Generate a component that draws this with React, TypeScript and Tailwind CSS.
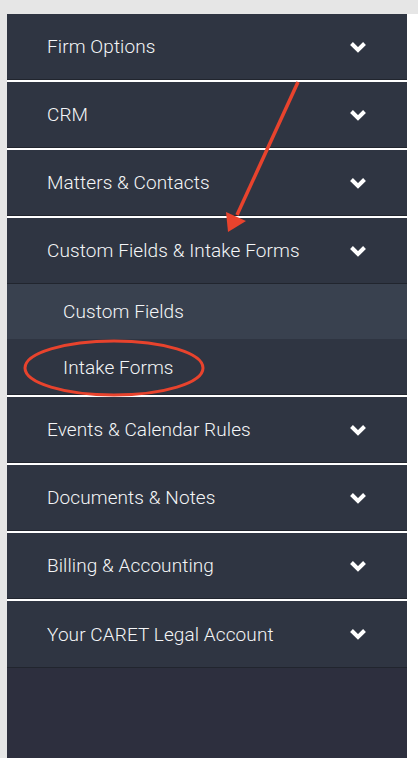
import React from "react"

interface INavItem {
    name: string,
    open?: boolean,
    children?: string[]
}

const items: INavItem[] = [
    { name: "Firm Options" },
    { name: "CRM" },
    { name: "Matters & Contacts" },
    { name: "Custom Fields & Intake Forms", open: true, children: ["Custom Fields", "Intake Forms"] },
    { name: "Events & Calendar Rules" },
    { name: "Documents & Notes" },
    { name: "Billing & Accounting" },
    { name: "Your CARET Legal Account" },
]

const Chevron = () => (
    <svg width="18" height="12" viewBox="0 0 18 12" className="shrink-0">
        <polyline points="2.5,2.5 9,9 15.5,2.5" fill="none" stroke="#ffffff" strokeWidth="4" strokeLinejoin="miter" />
    </svg>
)

const NavItem: React.FC<INavItem> = ({ name, children }) => {
    return (
        <li className="flex flex-col">
            <div className="flex h-[66px] items-center justify-between border-b border-[#21252e] pl-10 pr-[40px]">
                <span className="pt-[2px] text-[19px] font-light tracking-[0.005em] text-[#f4f5f7]">{name}</span>
                <Chevron />
            </div>
            {children && (
                <ul className="flex flex-col">
                    {children.map((c, i) => (
                        <li
                            key={c}
                            className={
                                i === 0
                                    ? "flex h-[55px] items-center bg-[#39414f] pl-14 pt-[2px] text-[19px] font-light tracking-[0.005em] text-[#f4f5f7]"
                                    : "flex h-[56px] items-center border-b border-[#21252e] pl-14 pt-[3px] text-[19px] font-light tracking-[0.005em] text-[#f4f5f7]"
                            }
                        >
                            {c}
                        </li>
                    ))}
                </ul>
            )}
            <div className="h-[2px] bg-white" />
        </li>
    )
}

export default function App() {
    return (
        <div className="relative flex h-[758px] w-[418px] flex-col bg-[#e6e6e6] pt-[14px] font-['Roboto',sans-serif]">
            <div className="flex flex-1 bg-white pl-[7px]">
                <div className="flex w-[400px] flex-col">
                    <ul className="flex flex-col bg-[#2f3542]">
                        {items.slice(0, 7).map((it) => (
                            <NavItem key={it.name} {...it} />
                        ))}
                        <li className="flex h-[67px] items-center justify-between border-b border-[#21252e] pl-10 pr-[40px]">
                            <span className="pt-[2px] text-[19px] font-light tracking-[0.005em] text-[#f4f5f7]">{items[7].name}</span>
                            <Chevron />
                        </li>
                    </ul>
                    <div className="flex-1 bg-[#2d2f3e]" />
                </div>
                <div className="w-[11px] bg-white" />
            </div>
            <div className="absolute left-0 top-[14px] h-[744px] w-[7px] bg-[#e6e6e6]" />

            {/* annotations */}
            <svg className="pointer-events-none absolute left-0 top-0" width="418" height="758">
                <line x1="298" y1="82" x2="237" y2="215" stroke="#e8432d" strokeWidth="3.5" />
                <polygon points="228,232 226,212 246,221" fill="#e8432d" />
                <ellipse cx="114" cy="368" rx="89" ry="27" fill="none" stroke="#e8432d" strokeWidth="3" />
            </svg>
        </div>
    )
}
